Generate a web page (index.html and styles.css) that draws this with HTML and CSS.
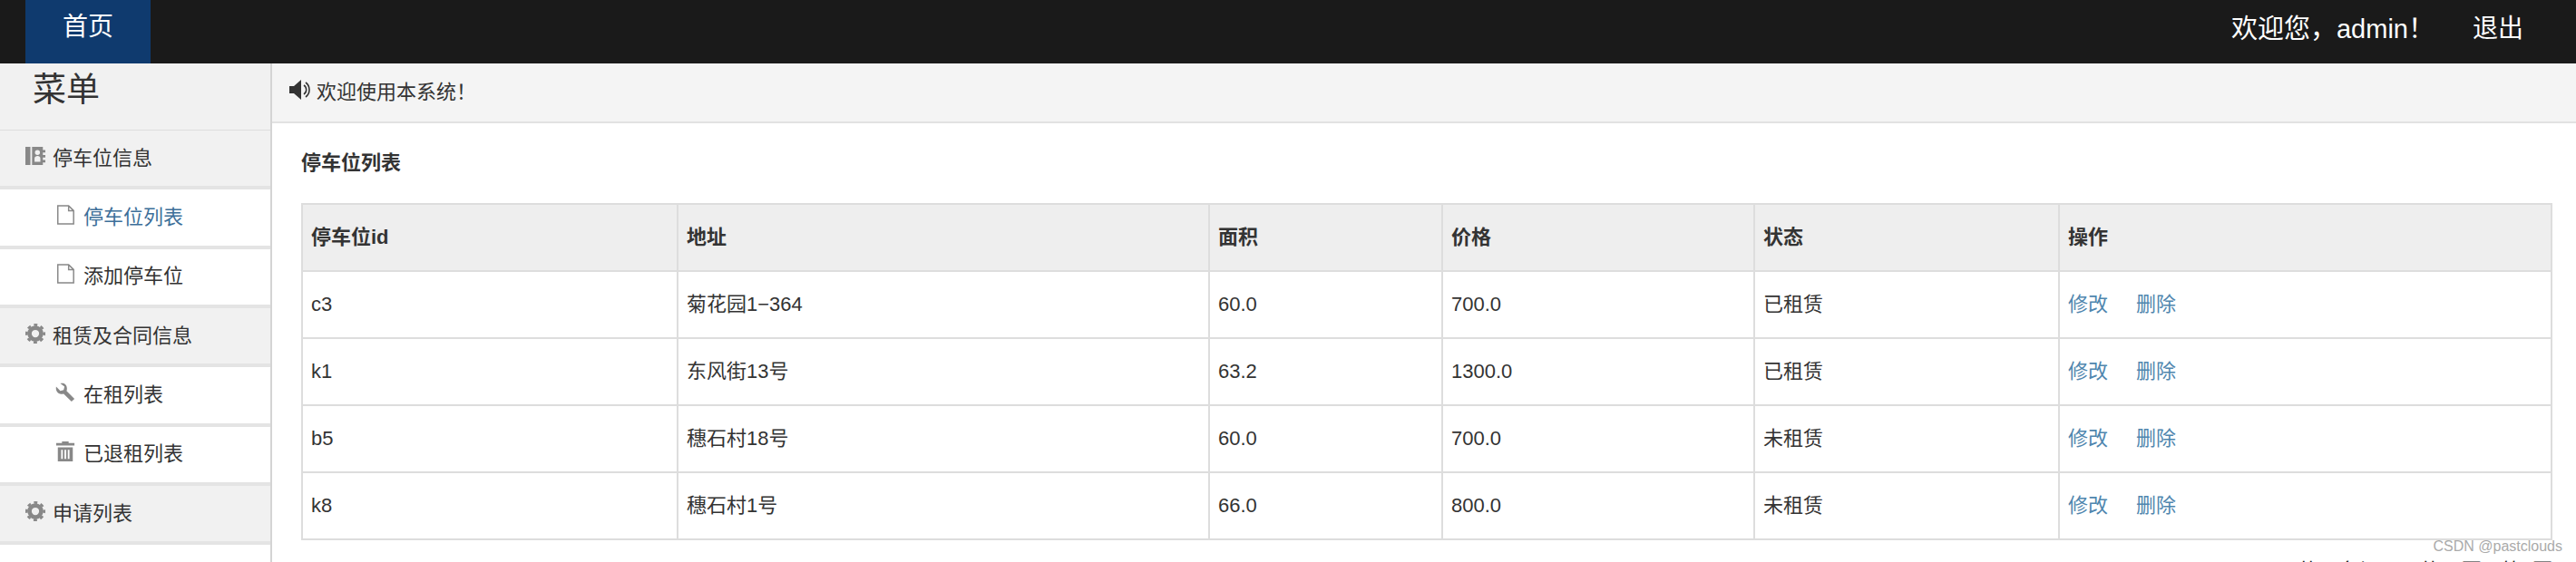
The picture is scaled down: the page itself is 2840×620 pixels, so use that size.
FILE: index.html
```html
<!DOCTYPE html>
<html lang="zh">
<head>
<meta charset="utf-8">
<title>停车位列表</title>
<link rel="stylesheet" href="styles.css">
</head>
<body>
<header class="topbar">
  <a class="home">首页</a>
  <div class="user"><span class="hello">欢迎您，admin！</span><a class="logout">退出</a></div>
</header>
<div class="layout">
  <aside class="sidebar">
    <h2 class="menu-title">菜单</h2>
    <div class="row group"><svg class="ic" viewBox="0 0 24 24"><path fill="#888" fill-rule="evenodd" d="M0 1h6v22H0zM8 1h13v4h3v3h-3v3h3v3h-3v3h3v3h-3v3H8zM11 15c0-2 2-3 3.500-3 2 0 3.500 1 3.500 3v4h-7zM14.500 5a3 3 0 1 0 0 6 3 3 0 0 0 0-6z"/></svg>停车位信息</div>
    <div class="row item active"><svg class="ic" viewBox="0 0 24 24"><path fill="none" stroke="#888" stroke-width="1.6" d="M3 1h13l6 6v16H3zM16 1v6h6"/></svg>停车位列表</div>
    <div class="row item"><svg class="ic" viewBox="0 0 24 24"><path fill="none" stroke="#888" stroke-width="1.6" d="M3 1h13l6 6v16H3zM16 1v6h6"/></svg>添加停车位</div>
    <div class="row group"><svg class="ic" viewBox="0 0 24 24"><circle cx="12" cy="12" r="7" fill="none" stroke="#888" stroke-width="5"/><circle cx="12" cy="12" r="10.500" fill="none" stroke="#888" stroke-width="3" stroke-dasharray="4.250 3.996" stroke-dashoffset="2.125"/></svg>租赁及合同信息</div>
    <div class="row item"><svg class="ic" viewBox="0 0 24 24"><path fill="#888" d="M1 5L6 10L10 9L11 5L6 1C10 0 14 2 14 7C14 8 14 9 13.500 10L23 19.500L19.500 23L10 13.500C9 14 8 14 7 14C3 14 0 10 1 5Z"/></svg>在租列表</div>
    <div class="row item"><svg class="ic" viewBox="0 0 24 24"><path fill="#888" fill-rule="evenodd" d="M8 0h8v2h7v3H1V2h7zM3 7h18v17H3zM7 10v11h2V10zM11 10v11h2V10zM15 10v11h2V10z"/></svg>已退租列表</div>
    <div class="row group"><svg class="ic" viewBox="0 0 24 24"><circle cx="12" cy="12" r="7" fill="none" stroke="#888" stroke-width="5"/><circle cx="12" cy="12" r="10.500" fill="none" stroke="#888" stroke-width="3" stroke-dasharray="4.250 3.996" stroke-dashoffset="2.125"/></svg>申请列表</div>
    <div class="row item last">用户看房申请列表</div>
  </aside>
  <main class="content">
    <div class="notice"><svg class="speaker" viewBox="0 0 24 24"><path fill="#333" d="M0 8h5l8-7v22l-8-7H0z"/><path fill="none" stroke="#333" stroke-width="1.600" d="M16 7a6 6 0 0 1 0 10M18 4a10 10 0 0 1 0 16"/></svg>欢迎使用本系统！</div>
    <section class="panel">
      <h3 class="panel-title">停车位列表</h3>
      <table class="grid">
        <colgroup><col class="c1"><col class="c2"><col class="c3"><col class="c4"><col class="c5"><col></colgroup>
        <thead><tr><th>停车位id</th><th>地址</th><th>面积</th><th>价格</th><th>状态</th><th>操作</th></tr></thead>
        <tbody>
          <tr><td>c3</td><td>菊花园1−364</td><td>60.0</td><td>700.0</td><td>已租赁</td><td><a>修改</a><a>删除</a></td></tr>
          <tr><td>k1</td><td>东风街13号</td><td>63.2</td><td>1300.0</td><td>已租赁</td><td><a>修改</a><a>删除</a></td></tr>
          <tr><td>b5</td><td>穗石村18号</td><td>60.0</td><td>700.0</td><td>未租赁</td><td><a>修改</a><a>删除</a></td></tr>
          <tr><td>k8</td><td>穗石村1号</td><td>66.0</td><td>800.0</td><td>未租赁</td><td><a>修改</a><a>删除</a></td></tr>
        </tbody>
      </table>
      <div class="pager"><span>共[4]条记录</span><span>共[1]页</span><span>第1页</span></div>
    </section>
  </main>
</div>
<div class="watermark">CSDN @pastclouds</div>
</body>
</html>
```
FILE: styles.css
```css
* { box-sizing: border-box; }
html, body { margin: 0; height: 620px; overflow: hidden; }
body { font-family: "Liberation Sans", "Noto Sans CJK SC", sans-serif; font-size: 22px; color: #333; background: #fff; position: relative; }
.topbar { height: 70px; background: #1a1a1a; color: #fff; font-size: 28px; display: flex; justify-content: space-between; padding-left: 28px; padding-right: 58px; }
.home { width: 138px; background: #0f3a6e; display: flex; align-items: center; justify-content: center; padding-bottom: 16px; }
.user { display: flex; align-items: flex-start; gap: 42px; padding-top: 8px; }
.hello { font-size: 29px; }
.logout { padding-top: 1px; }
.layout { display: flex; height: 550px; }
.sidebar { width: 300px; flex: none; border-right: 2px solid #d4d4d4; background: #fff; overflow: hidden; }
.menu-title { margin: 0; height: 74px; font-size: 37px; font-weight: 400; background: #f1f1f1; padding-left: 36px; line-height: 60px; border-bottom: 1px solid #ddd; }
.row { height: 65.33px; border-bottom: 4px solid #e4e4e4; display: flex; align-items: center; padding-bottom: 6px; }
.group { background: #f1f1f1; padding-left: 28px; gap: 8px; }
.item { background: #fff; padding-left: 61px; gap: 9px; }
.item.active { color: #3d6f99; }
.item.last { align-items: flex-start; padding: 13px 0 0 57px; height: 40px; border: 0; }
.ic { width: 22px; height: 22px; flex: none; }
.content { flex: 1; min-width: 0; }
.notice { height: 66px; background: #f4f4f4; border-bottom: 2px solid #e2e2e2; display: flex; align-items: center; padding-left: 19px; padding-bottom: 7px; gap: 6px; }
.speaker { width: 24px; height: 24px; }
.panel { padding: 0 26px 0 32px; }
.panel-title { margin: 0; height: 88px; font-size: 22px; font-weight: 700; line-height: 88px; }
.grid { border-collapse: collapse; width: 100%; table-layout: fixed; }
.grid th, .grid td { border: 2px solid #ddd; padding: 21px 9px 0; height: 74px; line-height: 30px; text-align: left; font-weight: 400; vertical-align: baseline; }
.grid th { background: #eee; font-weight: 700; }
.grid a { color: #4f86ae; margin-right: 30px; }
.grid a:first-child { margin-right: 31px; }
.c1 { width: 414px; } .c2 { width: 586px; } .c3 { width: 257px; } .c4 { width: 344px; } .c5 { width: 336px; }
.pager { margin-top: 15px; display: flex; justify-content: flex-end; gap: 22px; color: #222; }
.watermark { position: absolute; right: 15px; top: 594px; font-size: 16px; color: #aaa; }
```
